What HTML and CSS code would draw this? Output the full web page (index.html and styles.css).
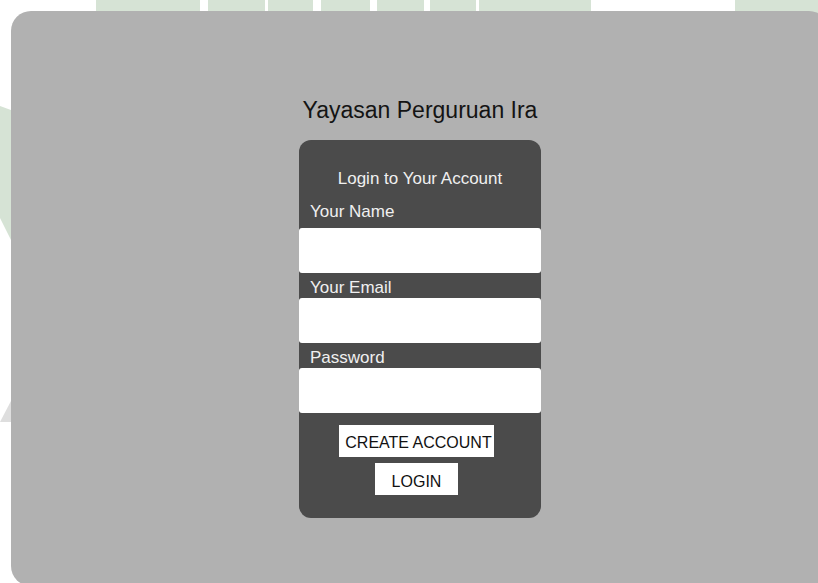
FILE: index.html
```html
<!DOCTYPE html>
<html lang="id">
<head>
<meta charset="utf-8">
<title>Login - Yayasan Perguruan Ira</title>
<link rel="stylesheet" href="styles.css">
</head>
<body>
<!-- decorative pale-green pattern behind the main panel -->
<svg class="backdrop" width="818" height="583" viewBox="0 0 818 583" aria-hidden="true">
  <g fill="#d6e3d5">
    <rect x="96" y="0" width="104" height="40"/>
    <rect x="208" y="0" width="57" height="40"/>
    <rect x="268" y="0" width="45" height="40"/>
    <rect x="321" y="0" width="49" height="40"/>
    <rect x="377" y="0" width="47" height="40"/>
    <rect x="430" y="0" width="46" height="40"/>
    <rect x="479" y="0" width="112" height="40"/>
    <rect x="735" y="0" width="83" height="40"/>
    <polygon points="0,106 30,117 30,278 0,218"/>
  </g>
  <polygon points="0,422 12,399 12,422" fill="#dedede"/>
</svg>

<main class="panel">
  <h1 class="site-title">Yayasan Perguruan Ira</h1>
  <form class="login-card">
    <h2 class="card-title">Login to Your Account</h2>

    <label class="field-label field-label--first" for="name">Your Name</label>
    <input class="field-input" id="name" type="text">

    <label class="field-label" for="email">Your Email</label>
    <input class="field-input" id="email" type="email">

    <label class="field-label" for="password">Password</label>
    <input class="field-input" id="password" type="password">

    <div class="actions">
      <button type="button" class="btn btn-create">CREATE ACCOUNT</button>
      <button type="submit" class="btn btn-login">LOGIN</button>
    </div>
  </form>
</main>
</body>
</html>
```

FILE: styles.css
```css
html,
body {
  margin: 0;
  height: 100%;
  overflow: hidden;
}

body {
  position: relative;
  background: #ffffff;
  font-family: "Liberation Sans", Arial, sans-serif;
}

.backdrop {
  position: absolute;
  left: 0;
  top: 0;
  z-index: 0;
}

/* large grey sheet holding the login form */
.panel {
  position: relative;
  z-index: 1;
  box-sizing: border-box;
  width: 818px;
  height: 575px;
  margin: 11px 0 0 11px;
  padding-top: 86px;
  border-radius: 20px;
  background: #b1b1b1;
  display: flex;
  flex-direction: column;
  align-items: center;
}

.site-title {
  margin: 0 0 17px;
  font-size: 23px;
  font-weight: normal;
  line-height: 26px;
  color: #141414;
}

.login-card {
  box-sizing: border-box;
  width: 242px;
  padding: 0 0 23px;
  border-radius: 12px;
  background: #4b4b4b;
  display: flex;
  flex-direction: column;
}

.card-title {
  margin: 29px 0 0;
  font-size: 17px;
  font-weight: normal;
  line-height: 20px;
  text-align: center;
  color: #f0f0f0;
}

.field-label {
  margin-top: 5px;
  padding-left: 11px;
  font-size: 17px;
  line-height: 20px;
  color: #f0f0f0;
}

.field-label--first {
  margin-top: 13px;
  padding-bottom: 6px;
}

.field-input {
  display: block;
  box-sizing: border-box;
  width: 100%;
  height: 45px;
  margin: 0;
  padding: 0 10px;
  border: none;
  border-radius: 3px;
  background: #ffffff;
  font: inherit;
  font-size: 16px;
}

.actions {
  margin-top: 12px;
  padding-right: 7px;
  display: flex;
  flex-direction: column;
  align-items: center;
  gap: 6px;
}

.btn {
  box-sizing: border-box;
  height: 32px;
  padding: 5px 0 0;
  border: none;
  border-radius: 0;
  background: #ffffff;
  color: #111111;
  font-family: inherit;
  font-size: 16px;
  white-space: nowrap;
}

.btn-create {
  padding: 4px 2px 0 6px;
}

.btn-login {
  width: 83px;
}
```
